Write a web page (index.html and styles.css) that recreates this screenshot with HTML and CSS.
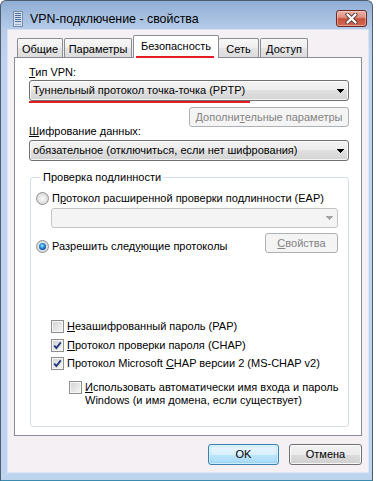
FILE: index.html
```html
<!DOCTYPE html>
<html lang="ru">
<head>
<meta charset="utf-8">
<title>VPN-подключение - свойства</title>
<link rel="stylesheet" href="styles.css">
</head>
<body>
<div class="window">
  <div class="titlebar">
    <svg class="app-icon" width="10" height="16" viewBox="0 0 10 16">
      <rect x="0.5" y="0.5" width="9" height="15" fill="#d3dfec" stroke="#7c8ea6"/>
      <rect x="2" y="2" width="6" height="1" fill="#4f6f9c"/>
      <rect x="2" y="4" width="6" height="1" fill="#4f6f9c"/>
      <rect x="2" y="6" width="6" height="1" fill="#4f6f9c"/>
      <rect x="2" y="8" width="6" height="1" fill="#4f6f9c"/>
      <rect x="2" y="10" width="6" height="1" fill="#4f6f9c"/>
      <rect x="2" y="13" width="6" height="1" fill="#9aaec6"/>
    </svg>
    <span class="title">VPN-подключение - свойства</span>
    <div class="close">
      <svg width="13" height="11" viewBox="0 0 13 11">
        <path d="M2.5 1.5 L10.5 9.5 M10.5 1.5 L2.5 9.5" stroke="#5a4444" stroke-width="4.2" stroke-linecap="round"/>
        <path d="M2.5 1.5 L10.5 9.5 M10.5 1.5 L2.5 9.5" stroke="#ffffff" stroke-width="2.2" stroke-linecap="round"/>
      </svg>
    </div>
  </div>
  <div class="client">
    <div class="tabs">
      <div class="tab tab-general">Общие</div>
      <div class="tab tab-params">Параметры</div>
      <div class="tab tab-security active">Безопасность<span class="mark mark-tab"></span></div>
      <div class="tab tab-net">Сеть</div>
      <div class="tab tab-access">Доступ</div>
    </div>
    <div class="panel">
      <div class="label"><u>Т</u>ип VPN:</div>
      <div class="combo"><span>Туннельный протокол точка-точка (PPTP)</span><svg class="arrow" width="7" height="4" viewBox="0 0 7 4"><path d="M0 0h7v1h-1v1h-1v1h-1v1h-1v-1h-1v-1h-1v-1h-1z" fill="#000"/></svg></div>
      <div class="mark mark-combo"></div>
      <div class="btn-row"><div class="btn disabled btn-advanced">Дополни<u>т</u>ельные параметры</div></div>
      <div class="label label-enc"><u>Ш</u>ифрование данных:</div>
      <div class="combo combo-enc"><span>обязательное (отключиться, если нет шифрования)</span><svg class="arrow" width="7" height="4" viewBox="0 0 7 4"><path d="M0 0h7v1h-1v1h-1v1h-1v1h-1v-1h-1v-1h-1v-1h-1z" fill="#000"/></svg></div>
      <div class="group">
        <div class="group-title">Проверка подлинности</div>
        <div class="opt opt-eap"><span class="radio"></span><span class="opt-text">П<u>р</u>отокол расширенной проверки подлинности (EAP)</span></div>
        <div class="combo disabled eap-combo"><span></span><svg class="arrow" width="7" height="4" viewBox="0 0 7 4"><path d="M0 0h7v1h-1v1h-1v1h-1v1h-1v-1h-1v-1h-1v-1h-1z" fill="#a3a3a3"/></svg></div>
        <div class="radio-row">
          <div class="opt opt-allow"><span class="radio checked"></span><span class="opt-text">Разрешить след<u>у</u>ющие протоколы</span></div>
          <div class="btn disabled btn-props"><u>С</u>войства</div>
        </div>
        <div class="opt chk chk-pap"><span class="check"></span><span class="opt-text"><u>Н</u>езашифрованный пароль (PAP)</span></div>
        <div class="opt chk chk-chap"><span class="check"><svg width="9" height="9" viewBox="0 0 9 9"><path d="M1.2 4.6 L3.4 7 L7.8 1.4" fill="none" stroke="#263c80" stroke-width="1.9"/></svg></span><span class="opt-text"><u>П</u>ротокол проверки пароля (CHAP)</span></div>
        <div class="opt chk chk-ms"><span class="check"><svg width="9" height="9" viewBox="0 0 9 9"><path d="M1.2 4.6 L3.4 7 L7.8 1.4" fill="none" stroke="#263c80" stroke-width="1.9"/></svg></span><span class="opt-text">Протокол Microsoft <u>C</u>HAP версии 2 (MS-CHAP v2)</span></div>
        <div class="opt chk chk-auto"><span class="check"></span><span class="opt-text"><u>И</u>спользовать автоматически имя входа и пароль<br>Windows (и имя домена, если существует)</span></div>
      </div>
    </div>
    <div class="buttons">
      <div class="btn btn-default btn-ok">OK</div>
      <div class="btn btn-cancel">Отмена</div>
    </div>
  </div>
</div>
</body>
</html>
```
FILE: styles.css
```css
* { box-sizing: border-box; margin: 0; padding: 0; }
html, body { width: 377px; height: 481px; overflow: hidden; }
body {
  background: #ffffff;
  font-family: "Liberation Sans", Arial, sans-serif;
  font-size: 11px;
  line-height: 13px;
  color: #000;
}
u { text-decoration: underline; text-underline-offset: 1px; }

.window {
  width: 373px;
  height: 481px;
  display: flex;
  flex-direction: column;
  border: 1px solid #4f5c6f;
  border-bottom-color: #3b8bb0;
  border-radius: 6px 6px 0 0;
  background: linear-gradient(#8eaed5 0, #a6bfe0 16px, #b7cdea 30px, #bdd3ee 60px, #bdd3ee 100%);
  padding: 0 4px 8px 7px;
}

.titlebar { height: 29px; flex: none; display: flex; align-items: flex-start; }
.app-icon { flex: none; margin: 10px 0 0 5px; }
.title { flex: 1; margin: 10px 0 0 7px; font-size: 12.4px; line-height: 16px; color: #000; white-space: nowrap; }
.close {
  flex: none;
  width: 31px;
  height: 17px;
  margin: 9px 1px 0 0;
  border: 1px solid #6b2b24;
  border-radius: 3px;
  background: linear-gradient(#ebb3a7 0, #dd907f 42%, #c7503d 52%, #d36a55 100%);
  box-shadow: inset 0 0 0 1px rgba(255, 225, 215, 0.45);
  display: flex;
  align-items: center;
  justify-content: center;
}

.client {
  flex: none;
  height: 442px;
  background: #f4f0f3;
  padding: 0 6px 7px 6px;
  display: flex;
  flex-direction: column;
  box-shadow: 0 0 0 1px rgba(255, 255, 255, 0.45);
}

.tabs {
  flex: none;
  height: 27px;
  display: flex;
  align-items: flex-end;
  padding-left: 3px;
  position: relative;
  z-index: 1;
}
.tab {
  flex: none;
  height: 19px;
  margin-left: 1px;
  border: 1px solid #898c95;
  border-bottom: 0;
  border-radius: 2px 2px 0 0;
  background: linear-gradient(#f7f7f7 0, #eeeeee 50%, #e5e5e5 50%, #dcdcdc 100%);
  text-align: center;
  padding-top: 4px;
  white-space: nowrap;
}
.tab:first-child { margin-left: 0; }
.tab.active { height: 23px; margin-bottom: -1px; background: #fff; position: relative; }
.tab-general { width: 46px; }
.tab-params { width: 68px; }
.tab-security { width: 86px; }
.tab-net { width: 40px; margin-left: 0; border-left: 0; }
.tab-access { width: 48px; }

.mark { background: #e41c24; }
.mark-tab { position: absolute; left: 2px; top: 20px; width: 78px; height: 2px; }
.mark-combo { width: 221px; height: 2px; }

.panel {
  flex: none;
  height: 379px;
  border: 1px solid #898c95;
  background: #fff;
  padding: 8px 12px 8px 14px;
}

.label { height: 13px; white-space: nowrap; }
.label-enc { margin-top: -2px; }

.combo {
  height: 21px;
  margin-top: 1px;
  border: 1px solid #707070;
  border-radius: 3px;
  background: linear-gradient(#f3f3f3 0, #ececec 50%, #e0e0e0 50%, #d4d4d4 100%);
  box-shadow: inset 0 0 0 1px rgba(255, 255, 255, 0.75);
  display: flex;
  align-items: center;
  justify-content: space-between;
  padding: 0 4px 0 3px;
  white-space: nowrap;
}
.combo-enc { margin-top: 2px; }
.arrow { flex: none; }

.btn-row { display: flex; justify-content: flex-end; margin-top: 4px; }

.btn {
  height: 21px;
  border: 1px solid #707070;
  border-radius: 3px;
  background: linear-gradient(#f2f2f2 0, #ebebeb 50%, #dddddd 50%, #cfcfcf 100%);
  box-shadow: inset 0 0 0 1px rgba(255, 255, 255, 0.8);
  display: flex;
  align-items: center;
  justify-content: center;
  white-space: nowrap;
}
.btn.disabled {
  height: 20px;
  border-color: #adb2b5;
  background: #f4f4f4;
  box-shadow: none;
  color: #838383;
}
.btn-advanced { width: 160px; }
.btn-props { width: 73px; }

.group {
  margin: 16px 0 0 1px;
  border: 1px solid #d5dfe5;
  border-radius: 3px;
  padding: 0 10px 19px 5px;
}
.group-title {
  width: fit-content;
  margin: -7px 0 0 5px;
  padding: 0 2px;
  background: #fff;
  height: 13px;
  white-space: nowrap;
}

.opt { display: flex; align-items: center; min-height: 13px; white-space: nowrap; }
.opt-text { margin-left: 3px; }
.opt-eap { margin-top: 8px; }

.combo.disabled {
  height: 20px;
  border-color: #c3c6c9;
  background: #f4f4f4;
  box-shadow: none;
}
.eap-combo { margin: 3px 0 0 15px; }

.radio-row { display: flex; justify-content: space-between; align-items: flex-start; margin-top: 5px; }
.opt-allow { margin-top: 7px; }

.radio {
  flex: none;
  width: 13px;
  height: 13px;
  border-radius: 50%;
  border: 1px solid #8f9091;
  background: radial-gradient(circle at 50% 50%, #fbfbfb 0, #e6e6e6 45%, #cdcdcd 100%);
  display: flex;
  align-items: center;
  justify-content: center;
}
.radio.checked::after {
  content: "";
  width: 7px;
  height: 7px;
  border-radius: 50%;
  background: radial-gradient(circle at 45% 40%, #a8ecff 0, #2f9ae0 35%, #0e4f9e 70%, #0a2f66 100%);
}

.check {
  flex: none;
  width: 13px;
  height: 13px;
  border: 1px solid #8e8f8f;
  background: linear-gradient(135deg, #cfcfcf 0, #e6e6e6 55%, #f7f7f7 100%);
  box-shadow: inset 0 0 0 1px #f6f6f6;
  display: flex;
  align-items: center;
  justify-content: center;
}

.chk { margin-left: 15px; }
.chk-pap { margin-top: 67px; }
.chk-chap { margin-top: 6px; }
.chk-ms { margin-top: 5px; }
.chk-auto { margin: 11px 0 0 33px; align-items: flex-start; }

.buttons { flex: none; display: flex; justify-content: flex-end; gap: 10px; margin-top: 8px; }
.btn-ok { width: 71px; }
.btn-cancel { width: 73px; }
.btn-default {
  border-color: #3c7fb1;
  background: linear-gradient(#eaf6fd 0, #d9f0fc 50%, #bee6fd 50%, #a7d9f5 100%);
  box-shadow: inset 0 0 0 1px rgba(255, 255, 255, 0.6), inset 0 0 2px 1px rgba(72, 200, 245, 0.5);
}
```
